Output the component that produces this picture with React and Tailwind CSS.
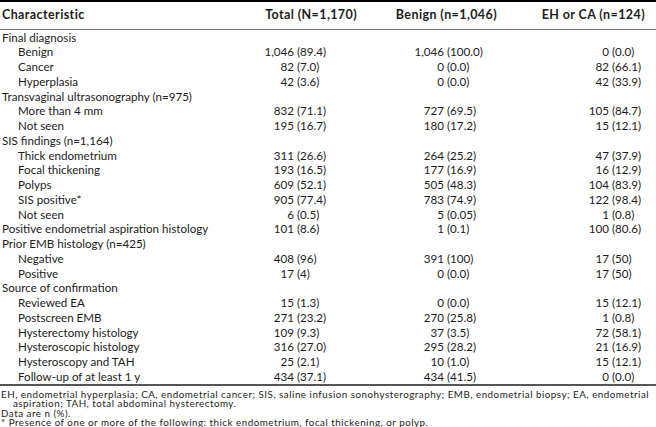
const rows = [
  { label: "Final diagnosis" },
  { label: "Benign", sub: true, v: ["1,046", "(89.4)", "1,046", "(100.0)", "0", "(0.0)"] },
  { label: "Cancer", sub: true, v: ["82", "(7.0)", "0", "(0.0)", "82", "(66.1)"] },
  { label: "Hyperplasia", sub: true, v: ["42", "(3.6)", "0", "(0.0)", "42", "(33.9)"] },
  { label: "Transvaginal ultrasonography (n=975)" },
  { label: "More than 4 mm", sub: true, v: ["832", "(71.1)", "727", "(69.5)", "105", "(84.7)"] },
  { label: "Not seen", sub: true, v: ["195", "(16.7)", "180", "(17.2)", "15", "(12.1)"] },
  { label: "SIS findings (n=1,164)" },
  { label: "Thick endometrium", sub: true, v: ["311", "(26.6)", "264", "(25.2)", "47", "(37.9)"] },
  { label: "Focal thickening", sub: true, v: ["193", "(16.5)", "177", "(16.9)", "16", "(12.9)"] },
  { label: "Polyps", sub: true, v: ["609", "(52.1)", "505", "(48.3)", "104", "(83.9)"] },
  { label: "SIS positive*", sub: true, v: ["905", "(77.4)", "783", "(74.9)", "122", "(98.4)"] },
  { label: "Not seen", sub: true, v: ["6", "(0.5)", "5", "(0.05)", "1", "(0.8)"] },
  { label: "Positive endometrial aspiration histology", v: ["101", "(8.6)", "1", "(0.1)", "100", "(80.6)"] },
  { label: "Prior EMB histology (n=425)" },
  { label: "Negative", sub: true, v: ["408", "(96)", "391", "(100)", "17", "(50)"] },
  { label: "Positive", sub: true, v: ["17", "(4)", "0", "(0.0)", "17", "(50)"] },
  { label: "Source of confirmation" },
  { label: "Reviewed EA", sub: true, v: ["15", "(1.3)", "0", "(0.0)", "15", "(12.1)"] },
  { label: "Postscreen EMB", sub: true, v: ["271", "(23.2)", "270", "(25.8)", "1", "(0.8)"] },
  { label: "Hysterectomy histology", sub: true, v: ["109", "(9.3)", "37", "(3.5)", "72", "(58.1)"] },
  { label: "Hysteroscopic histology", sub: true, v: ["316", "(27.0)", "295", "(28.2)", "21", "(16.9)"] },
  { label: "Hysteroscopy and TAH", sub: true, v: ["25", "(2.1)", "10", "(1.0)", "15", "(12.1)"] },
  { label: "Follow-up of at least 1 y", sub: true, v: ["434", "(37.1)", "434", "(41.5)", "0", "(0.0)"] },
];

const grid = "grid grid-cols-[250px_44px_106px_44px_121px_44px_1fr] items-center h-[14.75px]";

const App = () => {
  return (
    <div className="w-[656px] h-[427px] bg-white text-[#1c1c1c] font-['Lato',sans-serif] overflow-hidden">
      {/* table */}
      <div className="border-t-2 border-black border-b-2 border-b-[#555]">
        <div className="grid grid-cols-[250px_107px_140px_148px] items-center h-[28px] border-b border-[#777] text-[12.5px] tracking-[0.4px] font-bold">
          <div className="pl-[2px]">Characteristic</div>
          <div className="text-right">Total (N=1,170)</div>
          <div className="text-right">Benign (n=1,046)</div>
          <div className="text-right">EH or CA (n=124)</div>
        </div>
        <div className="text-[11.6px] leading-none">
          {rows.map((r, i) => (
            <div key={i} className={grid}>
              <div className={r.sub ? "pl-[18px]" : "pl-[2px]"}>{r.label}</div>
              {r.v ? (
                <>
                  <div className="text-right">{r.v[0]}</div>
                  <div className="pl-[3px]">{r.v[1]}</div>
                  <div className="text-right">{r.v[2]}</div>
                  <div className="pl-[3px]">{r.v[3]}</div>
                  <div className="text-right">{r.v[4]}</div>
                  <div className="pl-[3px]">{r.v[5]}</div>
                </>
              ) : null}
            </div>
          ))}
        </div>
      </div>

      {/* footnotes */}
      <div className="pt-[4px] pl-[1px] text-[9.8px] tracking-[0.5px] leading-[9.3px] whitespace-nowrap">
        <div>EH, endometrial hyperplasia; CA, endometrial cancer; SIS, saline infusion sonohysterography; EMB, endometrial biopsy; EA, endometrial</div>
        <div className="pl-[12px]">aspiration; TAH, total abdominal hysterectomy.</div>
        <div>Data are n (%).</div>
        <div>* Presence of one or more of the following: thick endometrium, focal thickening, or polyp.</div>
      </div>
    </div>
  );
};

export default App;
